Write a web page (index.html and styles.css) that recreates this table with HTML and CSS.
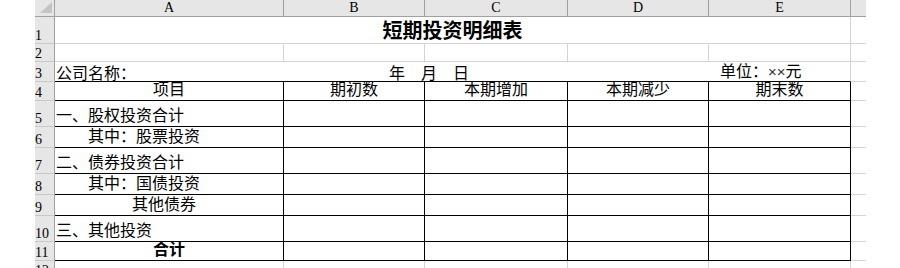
FILE: index.html
```html
<!DOCTYPE html>
<html lang="zh-CN">
<head>
<meta charset="utf-8">
<title>短期投资明细表</title>
<link rel="stylesheet" href="styles.css">
</head>
<body>
<div class="sheet">
  <!-- column headers -->
  <div class="hd corner">
    <svg width="19" height="16" viewBox="0 0 19 16"><polygon points="5,13 17,13 17,2" fill="#c4c4c4"/></svg>
  </div>
  <div class="hd">A</div>
  <div class="hd">B</div>
  <div class="hd">C</div>
  <div class="hd">D</div>
  <div class="hd">E</div>
  <div class="hd edge"></div>

  <!-- 1 -->
  <div class="rh">1</div>
  <div class="cell title span5">短期投资明细表</div>
  <div class="cell edge"></div>

  <!-- 2 -->
  <div class="rh">2</div>
  <div class="cell"></div>
  <div class="cell"></div>
  <div class="cell"></div>
  <div class="cell"></div>
  <div class="cell"></div>
  <div class="cell edge"></div>

  <!-- 3 -->
  <div class="rh">3</div>
  <div class="cell info span5 rule-bottom">
    <span class="company">公司名称：</span>
    <span class="date"><span>年</span><span>月</span><span>日</span></span>
    <span class="unit">单位：<span class="xx">××</span>元</span>
  </div>
  <div class="cell edge"></div>

  <!-- 4 -->
  <div class="rh">4</div>
  <div class="cell ruled center">项目</div>
  <div class="cell ruled center">期初数</div>
  <div class="cell ruled center">本期增加</div>
  <div class="cell ruled center">本期减少</div>
  <div class="cell ruled center">期末数</div>
  <div class="cell edge"></div>

  <!-- 5 -->
  <div class="rh">5</div>
  <div class="cell ruled">一、股权投资合计</div>
  <div class="cell ruled"></div>
  <div class="cell ruled"></div>
  <div class="cell ruled"></div>
  <div class="cell ruled"></div>
  <div class="cell edge"></div>

  <!-- 6 -->
  <div class="rh">6</div>
  <div class="cell ruled indent">其中：股票投资</div>
  <div class="cell ruled"></div>
  <div class="cell ruled"></div>
  <div class="cell ruled"></div>
  <div class="cell ruled"></div>
  <div class="cell edge"></div>

  <!-- 7 -->
  <div class="rh">7</div>
  <div class="cell ruled">二、债券投资合计</div>
  <div class="cell ruled"></div>
  <div class="cell ruled"></div>
  <div class="cell ruled"></div>
  <div class="cell ruled"></div>
  <div class="cell edge"></div>

  <!-- 8 -->
  <div class="rh">8</div>
  <div class="cell ruled indent">其中：国债投资</div>
  <div class="cell ruled"></div>
  <div class="cell ruled"></div>
  <div class="cell ruled"></div>
  <div class="cell ruled"></div>
  <div class="cell edge"></div>

  <!-- 9 -->
  <div class="rh">9</div>
  <div class="cell ruled indent-deep">其他债券</div>
  <div class="cell ruled"></div>
  <div class="cell ruled"></div>
  <div class="cell ruled"></div>
  <div class="cell ruled"></div>
  <div class="cell edge"></div>

  <!-- 10 -->
  <div class="rh">10</div>
  <div class="cell ruled">三、其他投资</div>
  <div class="cell ruled"></div>
  <div class="cell ruled"></div>
  <div class="cell ruled"></div>
  <div class="cell ruled"></div>
  <div class="cell edge"></div>

  <!-- 11 -->
  <div class="rh">11</div>
  <div class="cell ruled center strong">合计</div>
  <div class="cell ruled"></div>
  <div class="cell ruled"></div>
  <div class="cell ruled"></div>
  <div class="cell ruled"></div>
  <div class="cell edge"></div>

  <!-- 12 -->
  <div class="rh">12</div>
  <div class="cell"></div>
  <div class="cell"></div>
  <div class="cell"></div>
  <div class="cell"></div>
  <div class="cell"></div>
  <div class="cell edge"></div>
</div>
</body>
</html>
```

FILE: styles.css
```css
html, body {
  margin: 0;
  padding: 0;
  background: #fff;
  overflow: hidden;
}

.sheet {
  display: grid;
  grid-template-columns: 20px 229px 141px 143px 141px 142px 15px;
  grid-template-rows: 17px 27px 18px 20px 19px 26px 21px 26px 21px 21px 26px 19px 18px;
  width: 831px;
  margin-left: 35px;
  overflow: hidden;
  font-family: "Noto Sans CJK SC", sans-serif;
  font-size: 16px;
  color: #000;
}

.sheet > div {
  box-sizing: border-box;
  border-right: 1px solid #d4d4d4;
  border-bottom: 1px solid #d4d4d4;
  white-space: nowrap;
}

/* column headers */
.hd {
  background: #e6e6e6;
  border-right-color: #a0a0a0 !important;
  border-bottom-color: #a0a0a0 !important;
  font: 14px/16px "Liberation Serif", serif;
  display: flex;
  align-items: center;
  justify-content: center;
}

.corner svg {
  display: block;
}

.hd.edge {
  border-right: none !important;
}

/* row headers */
.rh {
  background: #e6e6e6;
  border-right-color: #a0a0a0 !important;
  border-bottom-color: #c8c8c8 !important;
  font: 14px/12px "Liberation Serif", serif;
  display: flex;
  align-items: flex-end;
  padding-bottom: 1px;
}

/* sheet cells: text sits on the bottom of the cell */
.cell {
  display: flex;
  align-items: flex-end;
  line-height: 16px;
  padding-left: 1px;
  padding-bottom: 4px;
}

.cell.edge {
  border-right: none !important;
}

.span5 {
  grid-column: span 5;
}

.title {
  justify-content: center;
  font-weight: bold;
  font-size: 20px;
  line-height: 20px;
  padding-left: 0;
  padding-bottom: 3px;
}

.info {
  display: grid;
  grid-template-columns: 333px 331px auto;
  align-items: end;
}

.date {
  display: flex;
  gap: 16px;
}

.xx {
  font-family: "Liberation Sans", sans-serif;
  font-size: 15px;
  color: #333;
}

.rule-bottom {
  border-bottom-color: #000 !important;
}

.ruled {
  border-right-color: #000 !important;
  border-bottom-color: #000 !important;
}

.center {
  justify-content: center;
  padding-left: 0;
}

.indent {
  padding-left: 33px;
}

.indent-deep {
  padding-left: 77px;
}

.strong {
  font-weight: bold;
}
```
